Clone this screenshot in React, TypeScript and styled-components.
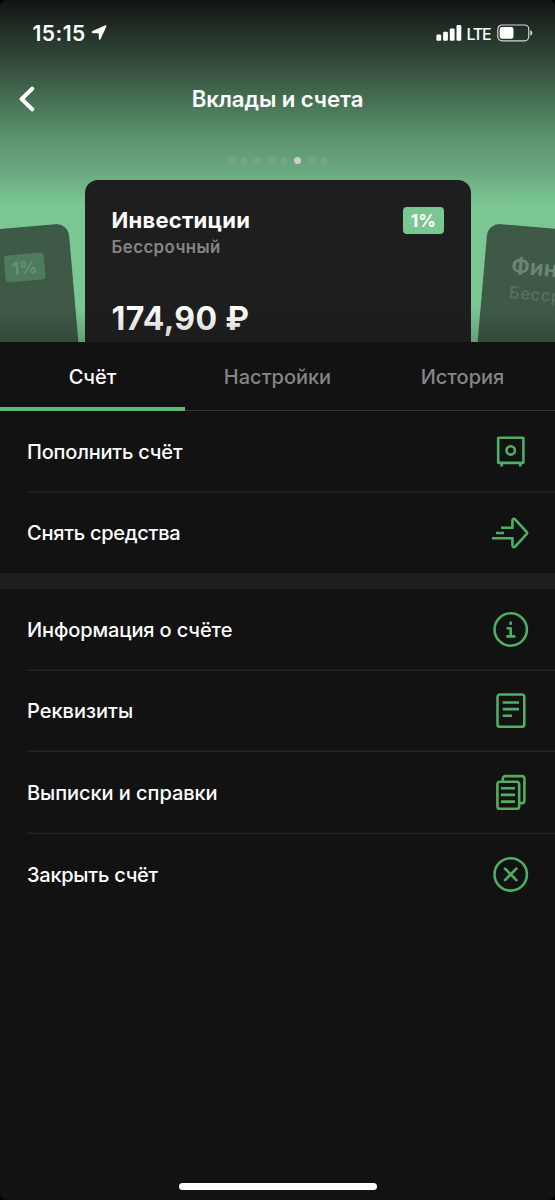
import React from "react";
import styled, { createGlobalStyle } from "styled-components";

const GlobalStyle = createGlobalStyle`
  * { box-sizing: border-box; }
  body { margin: 0; background: #000; font-family: Inter, "Noto Sans", sans-serif; color: #fff; }
`;

const Screen = styled.div`
  width: 555px;
  height: 1200px;
  display: flex;
  flex-direction: column;
  position: relative;
  overflow: hidden;
  background: #121212;
  border-radius: 7px;
`;

const Hero = styled.header`
  height: 341.5px;
  flex: none;
  display: flex;
  flex-direction: column;
  overflow: hidden;
  position: relative;
  background: linear-gradient(
    #131313 0px,
    #253329 35px,
    #37503e 68px,
    #477354 103px,
    #5c926c 136px,
    #6aaa7f 172px,
    #7bc793 206px
  );
  &::after {
    content: "";
    position: absolute;
    inset: auto 0 0 0;
    height: 34px;
    background: linear-gradient(rgba(18, 18, 18, 0), rgba(18, 18, 18, 0.22));
  }
`;

const StatusBar = styled.div`
  flex: none;
  height: 66px;
  padding: 0 22px 0 32.5px;
  display: flex;
  align-items: center;
`;

const Time = styled.span`
  font-size: 21px;
  font-weight: 600;
  letter-spacing: 0.45px;
  margin-right: 5px;
`;

const Signals = styled.div`
  margin-left: auto;
  display: flex;
  align-items: center;
`;

const Network = styled.span`
  font-size: 16px;
  font-weight: 500;
  margin: 1px 6.5px 0 4px;
  letter-spacing: -1.2px;
`;

const NavBar = styled.div`
  flex: none;
  height: 66px;
  display: grid;
  grid-template-columns: 55px 1fr 55px;
  align-items: center;
`;

const BackButton = styled.button`
  border: 0;
  padding: 0 0 0 18px;
  background: none;
  display: flex;
`;

const Title = styled.h1`
  margin: 0 0 2px;
  text-align: center;
  font-size: 22.2px;
  font-weight: 600;
  letter-spacing: -0.08px;
`;

const Dots = styled.div`
  flex: none;
  display: flex;
  justify-content: center;
  align-items: center;
  gap: 6.4px;
  height: 48px;
  padding: 9px 0 0 0.8px;
`;

const Dot = styled.i<{ $active?: boolean }>`
  width: 7px;
  height: 7px;
  border-radius: 50%;
  background: ${(p) => (p.$active ? "#d0cdd0" : "#7aa487")};
`;

const Carousel = styled.div`
  flex: none;
  display: flex;
  justify-content: center;
  gap: 17px;
`;

type Side = "left" | "right";

const Card = styled.article<{ $side?: Side }>`
  flex: none;
  width: 386px;
  height: 230px;
  padding: 27px 27px 0;
  border-radius: 13px;
  background: ${(p) => (p.$side ? "#3f5947" : "#1e1e1e")};
  color: ${(p) => (p.$side ? "#6b8473" : "#fff")};
  margin-top: ${(p) => (p.$side ? "42.5px" : "0")};
  transform-origin: ${(p) => (p.$side === "left" ? "top right" : "top left")};
  transform: ${(p) => (p.$side ? `rotate(${p.$side === "left" ? -5 : 5}deg)` : "none")};
`;

const CardHead = styled.div`
  display: flex;
  justify-content: space-between;
  height: 95px;
`;

const CardName = styled.div`
  font-size: 22px;
  font-weight: 700;
  line-height: 26px;
  letter-spacing: 0.25px;
`;

const CardTerm = styled.div<{ $side?: boolean }>`
  font-size: 16.8px;
  font-weight: 600;
  line-height: 28px;
  letter-spacing: 0.45px;
  color: ${(p) => (p.$side ? "#557060" : "#858585")};
`;

const Rate = styled.div<{ $side?: boolean }>`
  width: 40.5px;
  height: 27px;
  border-radius: 4px;
  display: flex;
  align-items: center;
  justify-content: center;
  font-size: 17.4px;
  font-weight: 700;
  background: ${(p) => (p.$side ? "#4f7b5d" : "#7bc793")};
  color: ${(p) => (p.$side ? "#698f75" : "#fff")};
`;

const Amount = styled.div`
  font-size: 32px;
  font-weight: 700;
  line-height: 34px;
  letter-spacing: 0.35px;
`;

const Tabs = styled.nav`
  flex: none;
  height: 69.5px;
  display: grid;
  grid-template-columns: repeat(3, 1fr);
  border-bottom: 1px solid #353535;
`;

const Tab = styled.button<{ $active?: boolean }>`
  border: 0;
  padding: 5px 0 0;
  margin-bottom: -1px;
  background: none;
  font: 500 20px Inter, "Noto Sans", sans-serif;
  color: ${(p) => (p.$active ? "#fff" : "#858585")};
  border-bottom: 4px solid ${(p) => (p.$active ? "#5bbb73" : "transparent")};
`;

const Group = styled.section`
  flex: none;
  display: flex;
  flex-direction: column;
`;

const Divider = styled.div`
  flex: none;
  height: 16px;
  margin-top: -1px;
  background: #1e1e1e;
`;

const Row = styled.div<{ $height: number }>`
  height: ${(p) => p.$height}px;
  margin-left: 27px;
  padding-right: 25px;
  display: flex;
  align-items: center;
  justify-content: space-between;
  & + & {
    box-shadow: 0 -1.5px 0 #242424;
  }
`;

const Label = styled.span<{ $spacing: number }>`
  font-size: 20px;
  font-weight: 500;
  letter-spacing: ${(p) => p.$spacing}px;
`;

const Glyph = styled.svg`
  width: 38px;
  height: 38px;
  fill: none;
  stroke: #4eae61;
  stroke-width: 2.6;
`;

const HomeIndicator = styled.div`
  width: 198px;
  height: 7px;
  margin: auto auto 10.5px 178.5px;
  border-radius: 4px;
  background: #fff;
`;

const icons = {
  safe: (
    <Glyph viewBox="0 0 38 38">
      <rect x="6.2" y="4.7" width="25.2" height="25.2" rx="0.5" />
      <circle cx="18.7" cy="17.4" r="4.2" />
      <path d="M9.7 30v3.6M28.3 30v3.6" strokeWidth="2.8" />
    </Glyph>
  ),
  send: (
    <Glyph viewBox="0 0 38 38">
      <path d="M9 13.7H20.4V6.7C20.4 4.8 22 4.3 23.1 5.4L34.6 17.8Q35.6 19 34.6 20.2L23.1 32.6C22 33.7 20.4 33.2 20.4 31.3V24.3H0M4 19h8" />
    </Glyph>
  ),
  info: (
    <Glyph viewBox="0 0 38 38">
      <circle cx="18.7" cy="18.5" r="16.2" />
      <path d="M15.7 17.2h3v8M15.4 25.4h7M18.7 11.6v1.2" strokeLinecap="round" strokeLinejoin="round" />
    </Glyph>
  ),
  details: (
    <Glyph viewBox="0 0 38 38">
      <rect x="5.5" y="2.5" width="26.8" height="32.3" rx="2.6" />
      <path d="M10.7 10.5H27M10.7 17.1H27M10.7 23.8H20" />
    </Glyph>
  ),
  documents: (
    <Glyph viewBox="0 0 38 38">
      <rect x="5.4" y="7.8" width="21.8" height="27" rx="2.6" />
      <path d="M10.8 7.8V4.7a2.6 2.6 0 0 1 2.6-2.6H29.8a2.6 2.6 0 0 1 2.6 2.6V26.5a2.6 2.6 0 0 1-2.6 2.6H27.2M9 14.3H23M9 20.9H23M9 27.6H23" />
    </Glyph>
  ),
  close: (
    <Glyph viewBox="0 0 38 38">
      <circle cx="18.7" cy="18.4" r="16.2" />
      <path d="M13 12.7l11.4 11.4M24.4 12.7L13 24.1" strokeLinecap="round" />
    </Glyph>
  ),
};

type Item = { label: string; icon: keyof typeof icons; spacing: number };

const operations: Item[] = [
  { label: "Пополнить счёт", icon: "safe", spacing: -0.2 },
  { label: "Снять средства", icon: "send", spacing: -0.27 },
];

const services: Item[] = [
  { label: "Информация о счёте", icon: "info", spacing: -0.13 },
  { label: "Реквизиты", icon: "details", spacing: 0 },
  { label: "Выписки и справки", icon: "documents", spacing: -0.06 },
  { label: "Закрыть счёт", icon: "close", spacing: -0.25 },
];

const List = ({ items, rowHeight }: { items: Item[]; rowHeight: number }) => (
  <Group>
    {items.map((item) => (
      <Row key={item.label} $height={rowHeight}>
        <Label $spacing={item.spacing}>{item.label}</Label>
        {icons[item.icon]}
      </Row>
    ))}
  </Group>
);

const AccountCard = ({ name, amount, side }: { name: string; amount: string; side?: Side }) => (
  <Card $side={side}>
    <CardHead>
      <div>
        <CardName>{name}</CardName>
        <CardTerm $side={!!side}>Бессрочный</CardTerm>
      </div>
      <Rate $side={!!side}>1%</Rate>
    </CardHead>
    <Amount>{amount}</Amount>
  </Card>
);

export default function App() {
  return (
    <Screen>
      <GlobalStyle />
      <Hero>
        <StatusBar>
          <Time>15:15</Time>
          <svg width="16" height="16" viewBox="0 0 16 16" fill="#fff">
            <path d="M13.9 0.5Q15.9 -0.1 15.3 1.7L9.6 14Q8.3 15.8 7.8 13.7V8.8Q7.8 8.2 7.2 8.2H1.8Q-0.5 7.4 1.6 6Z" />
          </svg>
          <Signals>
            <svg width="26" height="16" viewBox="0 0 26 16" fill="#fff">
              <rect x="0.4" y="9.5" width="4.8" height="6.2" rx="1.2" />
              <rect x="7.1" y="6.8" width="4.8" height="8.9" rx="1.2" />
              <rect x="13.8" y="3.4" width="4.8" height="12.3" rx="1.2" />
              <rect x="20.5" y="0" width="4.8" height="15.7" rx="1.2" />
            </svg>
            <Network>LTE</Network>
            <svg width="36" height="18" viewBox="0 0 36 18" fill="none">
              <rect x="0.8" y="1" width="31" height="15.8" rx="4.2" stroke="#fff" strokeOpacity="0.8" strokeWidth="1.2" />
              <rect x="2.7" y="3" width="13.8" height="11.8" rx="2.2" fill="#fff" />
              <path d="M33.3 6.2Q35.4 7 35.4 9T33.3 11.6Z" fill="#fff" fillOpacity="0.8" />
            </svg>
          </Signals>
        </StatusBar>
        <NavBar>
          <BackButton aria-label="Назад">
            <svg width="18" height="26" viewBox="0 0 18 26" fill="none" stroke="#fff" strokeWidth="4" strokeLinecap="round" strokeLinejoin="round">
              <path d="M14.2 2.7L3.6 13L14.2 23.3" />
            </svg>
          </BackButton>
          <Title>Вклады и счета</Title>
        </NavBar>
        <Dots>
          {Array.from({ length: 8 }, (_, i) => (
            <Dot key={i} $active={i === 5} />
          ))}
        </Dots>
        <Carousel>
          <AccountCard side="left" name="" amount="" />
          <AccountCard name="Инвестиции" amount="174,90 ₽" />
          <AccountCard side="right" name="Финансы" amount="" />
        </Carousel>
      </Hero>
      <Tabs>
        <Tab $active>Счёт</Tab>
        <Tab>Настройки</Tab>
        <Tab>История</Tab>
      </Tabs>
      <List items={operations} rowHeight={81.5} />
      <Divider />
      <List items={services} rowHeight={81.6} />
      <HomeIndicator />
    </Screen>
  );
}
